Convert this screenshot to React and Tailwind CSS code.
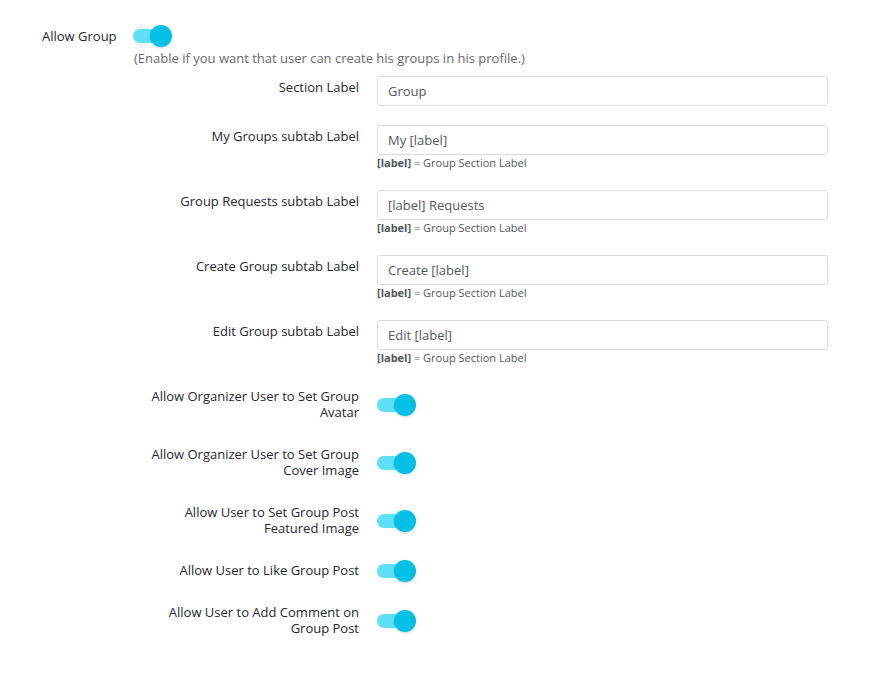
import React from 'react'

const textRows = [
  { label: 'Section Label', value: 'Group', help: false },
  { label: 'My Groups subtab Label', value: 'My [label]', help: true },
  { label: 'Group Requests subtab Label', value: '[label] Requests', help: true },
  { label: 'Create Group subtab Label', value: 'Create [label]', help: true },
  { label: 'Edit Group subtab Label', value: 'Edit [label]', help: true },
]

const toggleRows = [
  'Allow Organizer User to Set Group Avatar',
  'Allow Organizer User to Set Group Cover Image',
  'Allow User to Set Group Post Featured Image',
  'Allow User to Like Group Post',
  'Allow User to Add Comment on Group Post',
]

function Toggle() {
  return (
    <div className="relative h-[22px] w-[40px] flex items-center">
      <div className="h-[14px] w-[34px] rounded-full bg-[#5fe0f6]" />
      <div className="absolute left-[17px] top-0 h-[22px] w-[22px] rounded-full bg-[#00c0e6] shadow-[0_1px_3px_rgba(0,0,0,0.18)]" />
    </div>
  )
}

export default function App() {
  return (
    <div className="min-h-[680px] bg-white pt-[25px] pl-[42px] text-[13px] leading-[16px] text-[#23282d]" style={{ fontFamily: '"Open Sans", sans-serif' }}>
      {/* Allow Group */}
      <div className="flex items-center h-[21px]">
        <div className="w-[91px]">Allow Group</div>
        <Toggle />
      </div>
      <div className="ml-[92px] mt-[3px] text-[#646970] leading-[18px]">
        (Enable if you want that user can create his groups in his profile.)
      </div>

      <div className="ml-[91px] mt-[9px] flex flex-col gap-[19px]">
        {textRows.map((row) => (
          <div key={row.label} className="flex">
            <div className="w-[226px] pt-[3px] text-right">{row.label}</div>
            <div className="ml-[18px] w-[451px]">
              <div className="h-[30px] rounded-[3px] border border-[#dcdcde] px-[10px] flex items-center text-[#50575e]">
                {row.value}
              </div>
              {row.help && (
                <div className="h-[16px] text-[11px] leading-[16px] text-[#50575e]">
                  <span className="font-bold">[label]</span> = Group Section Label
                </div>
              )}
            </div>
          </div>
        ))}
      </div>

      <div className="ml-[91px] mt-[22px] flex flex-col gap-[26px]">
        {toggleRows.map((label) => (
          <div key={label} className="flex items-center">
            <div className="w-[226px] text-right">{label}</div>
            <div className="ml-[18px] h-[16px] flex items-center translate-y-[1px]">
              <Toggle />
            </div>
          </div>
        ))}
      </div>
    </div>
  )
}
